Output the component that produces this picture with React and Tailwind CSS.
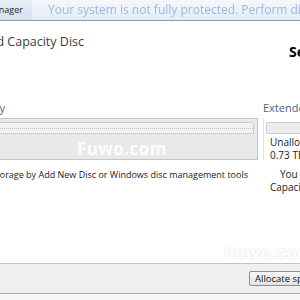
export default function App() {
  return (
    <div
      className="w-[300px] h-[300px] overflow-hidden bg-white flex flex-col"
      style={{ fontFamily: '"Open Sans", "Noto Sans", sans-serif' }}
    >
      {/* address / notification bar */}
      <div className="h-[21px] shrink-0 flex items-center bg-gradient-to-b from-[#f4f8fc] to-[#e4ecf6] border-b border-[#9a9a9a] whitespace-nowrap">
        <div className="h-full w-[32px] shrink-0 flex items-center justify-end pr-[9px] bg-gradient-to-b from-[#e9eef5] to-[#d6e0ec] text-[9px] text-[#1e1e1e]">
          <span>Manager</span>
        </div>
        <span className="ml-[16px] text-[12px] text-[#9cb8e0] blur-[0.5px]">
          Your system is not fully protected. Perform disc check
        </span>
      </div>

      {/* heading */}
      <div className="flex items-start justify-between whitespace-nowrap mt-[15px] h-[30px]">
        <div className="w-[84px] shrink-0 flex justify-end">
          <span className="text-[12.5px] text-[#3c3c3c] leading-none">Add Extended Capacity Disc</span>
        </div>
        <div className="w-[11px] shrink-0 flex justify-start mt-[9px]">
          <span className="text-[14px] font-bold text-black leading-none">Settings</span>
        </div>
      </div>

      {/* disc maps */}
      <div className="mt-[36px] flex whitespace-nowrap">
        <div className="w-[258px] shrink-0 flex flex-col">
          <div className="w-[5px] flex justify-end h-[11px] mb-[5px]">
            <span className="text-[11px] text-[#4a6684] leading-none">Total Capacity</span>
          </div>
          <div className="h-[42px] bg-[#e9e9e9] border-y border-r border-[#c6c6c6] pt-[3px] pr-[3px] flex flex-col">
            <div className="h-[12px] bg-[#f2f2f2] border-y border-r border-[#cdcdcd] rounded-r-[2px] flex items-center">
              <div className="w-full h-0 border-t border-dotted border-[#c0c0c0]"></div>
            </div>
            <div className="ml-[77px] mt-[5px] text-[17px] leading-[20px] font-bold text-white/85 tracking-wide">Fuwo.com</div>
          </div>
        </div>
        <div className="flex-1 flex flex-col ml-[5px]">
          <span className="h-[11px] mb-[5px] text-[11px] text-[#4a6684] leading-none">Extended Capacity</span>
          <div className="h-[42px] border-l border-[#e2e2e2] pt-[4px] pl-[2px]">
            <div className="h-[12px] bg-[#ececec] border-y border-l border-[#cdcdcd] rounded-l-[2px]"></div>
            <div className="mt-[2px] ml-[4px] text-[10px] leading-[13px] text-[#222]">
              <div>Unallocated</div>
              <div>0.73 TB</div>
            </div>
          </div>
        </div>
      </div>

      {/* hint */}
      <div className="mt-[8px] flex whitespace-nowrap text-[9px] font-medium text-[#222] leading-[13px]">
        <div className="w-[248px] shrink-0 flex justify-end">
          <span>Expand storage by Add New Disc or Windows disc management tools</span>
        </div>
        <div className="flex flex-col ml-[22px] text-[10px]">
          <span className="ml-[10px]">You can add</span>
          <span>Capacity Disc</span>
        </div>
      </div>

      <div className="flex-1 flex justify-end items-end">
        <span className="-mr-[14px] mb-[1px] text-[17px] leading-[18px] font-bold text-white tracking-wide [text-shadow:0_0_2px_#d8d8d8]">Fuwo.com</span>
      </div>

      {/* footer */}
      <div className="h-[30px] shrink-0 bg-[#efefef] border-t border-[#c4c4c4] flex items-center justify-end">
        <button className="h-[15px] w-[60px] -mr-[9px] bg-gradient-to-b from-[#f8f8f8] to-[#e2e2e2] border border-[#8e8e8e] rounded-[2px] text-[9.5px] text-[#111] text-left pl-[5px] leading-none whitespace-nowrap overflow-hidden">
          Allocate space
        </button>
      </div>
      <div className="h-[7px] shrink-0 bg-[#f6f6f6] border-t border-[#a8a8a8]"></div>
    </div>
  );
}
